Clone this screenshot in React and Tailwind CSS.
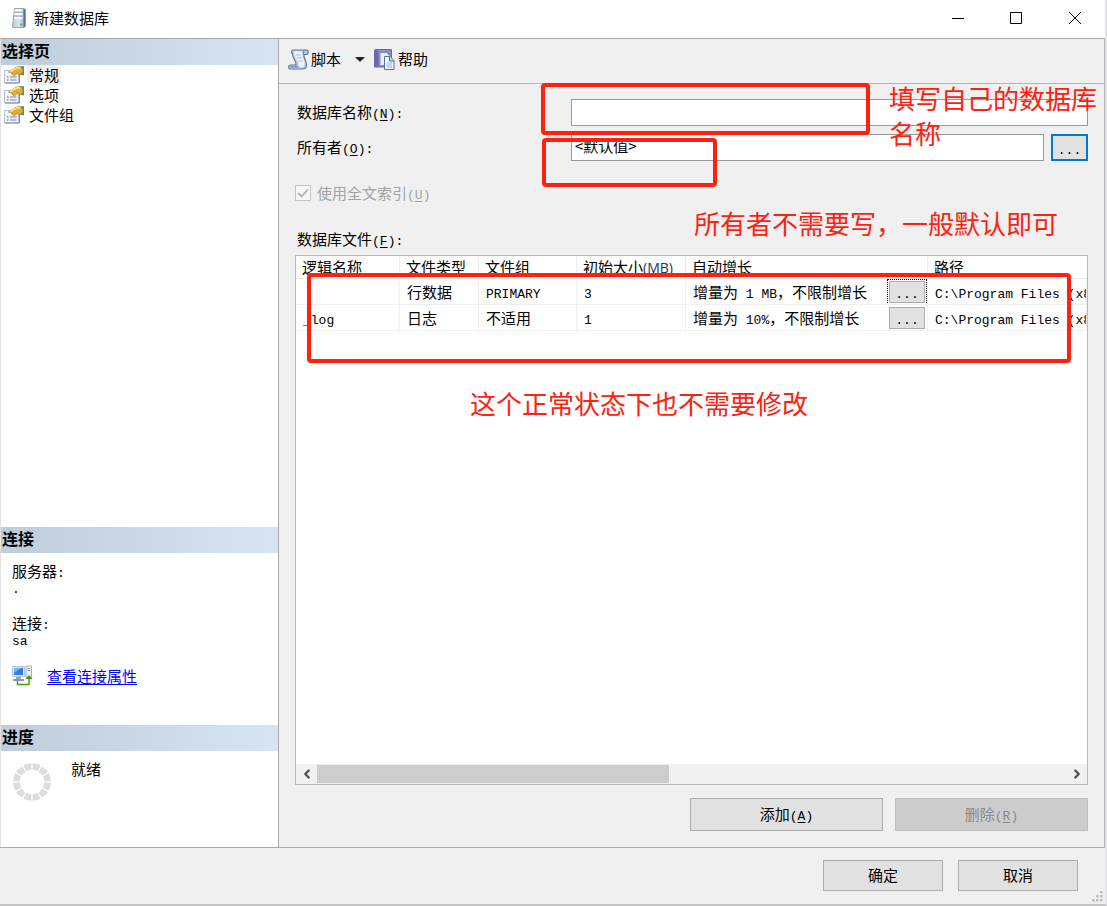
import { ChevronLeft, ChevronRight } from 'lucide-react';

const pages = ['常规', '选项', '文件组'];

const files = [
  { name: '', type: '行数据', group: 'PRIMARY', size: '3', growth: ['增量为', ' 1 MB', '，不限制增长'], path: 'C:\\Program Files (x86)' },
  { name: '_log', type: '日志', group: '不适用', size: '1', growth: ['增量为', ' 10%', '，不限制增长'], path: 'C:\\Program Files (x86)' },
];

const Mono = ({ children }) => (
  <span className="font-['Liberation_Mono','Noto_Sans_CJK_SC',monospace] text-[13px] leading-none whitespace-pre">{children}</span>
);

// Windows style access key, e.g. (N)
const Key = ({ letter, colon }) => (
  <Mono>(<u className="underline-offset-2">{letter}</u>){colon && ':'}</Mono>
);

const ServerIcon = () => (
  <svg width="14" height="20" viewBox="0 0 14 20">
    <defs>
      <linearGradient id="srv" x1="0" x2="1">
        <stop offset="0" stopColor="#b9c9dc" />
        <stop offset="0.5" stopColor="#dde7f1" />
        <stop offset="1" stopColor="#8ba3c0" />
      </linearGradient>
    </defs>
    <path d="M2.500 0.500H12l1.500 1v17l-1.500 1H1L0.500 18z" fill="url(#srv)" stroke="#7f93b0" strokeWidth="0.800" />
    <path d="M2.500 2.500h8M2.500 6h8M2.500 10h8" stroke="#fff" strokeWidth="2" />
    <path d="M2.500 4.200h8M2.500 8h8" stroke="#7f97b5" strokeWidth="0.800" />
    <path d="M12.300 1.500v17" stroke="#566f92" strokeWidth="1.600" />
    <circle cx="9" cy="16.500" r="1.200" fill="#5fd23c" />
  </svg>
);

const PageIcon = () => (
  <svg width="21" height="18" viewBox="0 0 21 18">
    <path d="M0.500 4.500h14v12.500h-14z" fill="#f1f4fb" stroke="#b9c0d4" />
    <path d="M1 17h14.500V8" stroke="#7c88ab" fill="none" />
    <path d="M3 11h1.500M3 14h1.500" stroke="#7f8fd8" strokeWidth="1.500" />
    <path d="M6 11h6.500M6 14h6.500" stroke="#9aa8e2" strokeWidth="1.500" />
    <path d="M14 0.500h6v9l-4-1z" fill="#4b9468" />
    <path d="M17 0.500h3v4z" fill="#4a86b8" />
    <path d="M4.500 6L9 3.200l3-2 4.500-.4 2.700 2.700-.4 3.500-3.300 1.500-2.500-1-2.500 2.300-1.800-.8-.7-1.800z" fill="#e6ab2c" stroke="#a8781c" strokeWidth="0.700" />
    <path d="M6 5.800L10.500 3l3-1.200 2.800 .2" stroke="#ffe791" strokeWidth="1.500" fill="none" />
  </svg>
);

const ScriptIcon = () => (
  <svg width="21" height="21" viewBox="0 0 21 21">
    <path d="M5 1h13c3 0 3 4.500 0 4.500h-2c-1 3 3 7 2.500 11-.3 2.500-1.500 3.500-3.500 3.500H2.500c-2.500 0-2.500-4 0-4H8C9 12 4 9 4.500 5 3 4 3 1.500 5 1z" fill="#b8cce8" stroke="#64799b" strokeWidth="1.200" />
    <path d="M6 2.500h8.500c-1.500 5 3 8.500 2 13-.5 2-1.500 2.500-3 2.500h-3C12 12 5 9 6 2.500z" fill="#eaf2fb" />
    <path d="M7.500 6h5M8.500 9h5M10.500 12h4" stroke="#a5bbdb" />
    <path d="M16 5.500c-1.500-1-1-4 1.500-4M2.500 17.800h8" fill="none" stroke="#7289ae" strokeWidth="1.200" />
  </svg>
);

const HelpIcon = () => (
  <svg width="21" height="21" viewBox="0 0 21 21">
    <path d="M0.500 1l1.500-.5h15.500v17.500h-17z" fill="#8f8bc9" stroke="#6a66a8" />
    <path d="M1 1.500h3.500V17.500H1z" fill="#6b67ae" />
    <path d="M6 3.500h6.500l3 3v10H6z" fill="#e9f0fa" stroke="#7f90b4" />
    <path d="M10.500 7.500h5.500l4 4v9h-9.500z" fill="#f6faff" stroke="#56719a" />
    <path d="M15.500 7.500v4.500H20" fill="#b9cfea" stroke="#56719a" />
    <path d="M12.500 14h5.500M12.500 16h5.500M12.500 18h5.500" stroke="#93afd6" />
  </svg>
);

const ConnectionIcon = () => (
  <svg width="21" height="21" viewBox="0 0 21 21">
    <path d="M0.500 1.500h12v10h-12z" fill="#dce6f3" stroke="#b9c4d2" />
    <path d="M2 3h9v7H2z" fill="#2f7ce0" />
    <path d="M2 3h7L2 8z" fill="#78b4f5" />
    <path d="M4 12h5v2H4z" fill="#9aa6b5" />
    <path d="M1 14h11v2H1z" fill="#8b97a8" />
    <path d="M14 1h5.500v12H14z" fill="#e9edf3" stroke="#a6b0be" />
    <path d="M15.500 3.500h2.500M15.500 5.500h2.500" stroke="#8593a6" />
    <path d="M5.500 16v3.500H17V13" fill="none" stroke="#3aa00c" strokeWidth="1.400" />
    <path d="M17 10l3.500 4h-7z" fill="#3aa00c" />
  </svg>
);

const Spinner = () => (
  <svg width="38" height="38" viewBox="0 0 38 38">
    <circle cx="19" cy="19" r="15.500" fill="none" stroke="#dcdcdc" strokeWidth="6.500" pathLength="120" strokeDasharray="8.400 1.600" strokeDashoffset="-0.800" />
  </svg>
);

const SectionTitle = ({ children }) => (
  <h2 className="h-[26px] shrink-0 pl-px leading-[22px] text-[16px] font-bold bg-linear-to-r from-[#bfccda] to-[#d7e5f3]">
    {children}
  </h2>
);

const Sidebar = () => (
  <aside className="w-[279px] shrink-0 flex flex-col bg-white border-l border-l-[#e3e3e3] border-r border-r-[#a9a9ae]">
    <SectionTitle>选择页</SectionTitle>
    <nav className="flex-1 pl-[3px]">
      {pages.map((page, i) => (
        <button key={page} className="flex items-center h-5 gap-0.5">
          <PageIcon />
          <span className={i === 0 ? 'px-0.5 leading-5 bg-[#f0f0f0]' : 'px-0.5 leading-5'}>{page}</span>
        </button>
      ))}
    </nav>

    <SectionTitle>连接</SectionTitle>
    <div className="h-[172px] pl-[11px] pt-2">
      <p className="h-5 leading-5">服务器<Mono>:</Mono></p>
      <p className="h-3 leading-3"><Mono>.</Mono></p>
      <p className="h-5 mt-5 leading-5">连接<Mono>:</Mono></p>
      <p className="h-3 leading-3"><Mono>sa</Mono></p>
      <div className="flex items-center gap-3.5 mt-5">
        <ConnectionIcon />
        <a href="#connection" className="text-[#0000ff] underline underline-offset-2 leading-5">查看连接属性</a>
      </div>
    </div>

    <SectionTitle>进度</SectionTitle>
    <div className="h-24 flex items-start gap-5 pl-3 pt-3">
      <Spinner />
      <p className="leading-3">就绪</p>
    </div>
  </aside>
);

const FileTable = () => (
  <div className="flex-1 flex flex-col overflow-hidden bg-white border border-[#b9b9c2]">
    <table className="w-full table-fixed border-separate border-spacing-0 text-left">
      <colgroup>
        <col className="w-[104px]" />
        <col className="w-[79px]" />
        <col className="w-[98px]" />
        <col className="w-[109px]" />
        <col className="w-[242px]" />
        <col />
      </colgroup>
      <thead>
        <tr className="h-[23px] whitespace-nowrap">
          {['逻辑名称', '文件类型', '文件组', '初始大小', '自动增长', '路径'].map((title) => (
            <th key={title} className="p-0 pl-1.5 font-normal leading-5 border-r border-b border-[#ececec] last:border-r-0">
              {title}
              {title === '初始大小' && <span className="text-[14px] leading-none font-['Open_Sans',sans-serif] text-[#26345c]">(MB)</span>}
            </th>
          ))}
        </tr>
      </thead>
      <tbody>
        {files.map((file, i) => (
          <tr key={file.type} className="h-[26px] whitespace-nowrap [&>td]:p-0 [&>td]:pl-[7px] [&>td]:leading-5 [&>td]:overflow-hidden [&>td]:border-r [&>td]:border-b [&>td]:border-[#f0f0f0]">
            <td><Mono>{file.name}</Mono></td>
            <td>{file.type}</td>
            <td>{i === 0 ? <Mono>{file.group}</Mono> : file.group}</td>
            <td><Mono>{file.size}</Mono></td>
            <td>
              <div className="flex items-center justify-between h-[25px]">
                <span>{file.growth[0]}<Mono>{file.growth[1]}</Mono>{file.growth[2]}</span>
                <span className={i === 0 ? 'p-px border border-dotted border-black' : 'p-px border border-transparent'}>
                  <button aria-label="更改自动增长" className="block w-9 h-[22px] bg-[#e1e1e1] border border-[#adadad] leading-5">
                    <Mono>...</Mono>
                  </button>
                </span>
              </div>
            </td>
            <td><Mono>{file.path}</Mono></td>
          </tr>
        ))}
      </tbody>
    </table>

    <div className="mt-auto h-5 flex items-center bg-[#f0f0f0]">
      <button aria-label="向左滚动" className="w-[21px] flex justify-center text-[#505050]">
        <ChevronLeft size={14} strokeWidth={4} />
      </button>
      <div className="flex-1 h-[18px]">
        <div className="w-[47%] h-full bg-[#cdcdcd]" />
      </div>
      <button aria-label="向右滚动" className="w-[21px] flex justify-center text-[#505050]">
        <ChevronRight size={14} strokeWidth={4} />
      </button>
    </div>
  </div>
);

const General = () => (
  <main className="flex-1 min-w-0 flex flex-col border-r border-[#b4b4b8]">
    <div className="h-[45px] shrink-0 flex items-center pl-[9px] pb-1 border-b border-[#b4b4b8]">
      <button className="flex items-center gap-0.5">
        <ScriptIcon />
        脚本
      </button>
      <button aria-label="脚本选项" className="pl-3.5 pr-[9px]">
        <svg width="10" height="5" viewBox="0 0 10 5"><path d="M0 0h10L5 5z" fill="#222" /></svg>
      </button>
      <button className="flex items-center gap-[3px]">
        <HelpIcon />
        帮助
      </button>
    </div>

    <div className="flex-1 flex flex-col px-4 pt-[15px] pb-4">
      <div className="flex items-center">
        <label htmlFor="db-name" className="w-[276px] pl-0.5">数据库名称<Key letter="N" colon /></label>
        <input id="db-name" type="text" className="flex-1 min-w-0 h-[27px] px-1 bg-white border border-[#999999] outline-none" />
      </div>
      <div className="flex items-center mt-2">
        <label htmlFor="owner" className="w-[276px] pl-0.5">所有者<Key letter="O" colon /></label>
        <input id="owner" type="text" defaultValue="<默认值>" className="flex-1 min-w-0 h-[27px] px-[3px] pb-1 bg-white border border-[#999999] outline-none" />
        <button aria-label="浏览所有者" className="w-[37px] h-[27px] ml-[7px] bg-[#e1e1e1] border-2 border-[#0078d7] leading-5"><Mono>...</Mono></button>
      </div>

      <div className="flex items-center gap-1.5 mt-5 h-6 text-[#a3a3a3]">
        <span className="relative flex">
          <input id="fulltext" type="checkbox" defaultChecked disabled className="appearance-none size-4 bg-[#f7f7f7] border border-[#c4c4c4]" />
          <svg className="absolute inset-0 pointer-events-none" width="16" height="16" viewBox="0 0 16 16">
            <path d="M3 8l3.500 3.500L13 4.500" fill="none" stroke="#b0b0b0" strokeWidth="1.800" />
          </svg>
        </span>
        <label htmlFor="fulltext">使用全文索引<Key letter="U" /></label>
      </div>

      <h3 className="h-5 mt-6 mb-1.5 pl-0.5 leading-5">数据库文件<Key letter="F" colon /></h3>
      <FileTable />

      <div className="flex justify-end gap-3 mt-[13px]">
        <button className="w-[193px] h-[33px] bg-[#e1e1e1] border border-[#adadad]">添加<Key letter="A" /></button>
        <button disabled className="w-[193px] h-[33px] bg-[#cccccc] border border-[#bfbfbf] text-[#8b8b8b]">删除<Key letter="R" /></button>
      </div>
    </div>
  </main>
);

const Annotations = () => (
  <div className="absolute inset-0 pointer-events-none text-[26px] leading-[35px] text-[#ff2010]">
    <div className="absolute left-[541px] top-[83px] w-[329px] h-[52px] border-4 border-[#ff2010] rounded-sm" />
    <div className="absolute left-[542px] top-[138px] w-[175px] h-[49px] border-4 border-[#ff2010] rounded-sm" />
    <div className="absolute left-[307px] top-[273px] w-[764px] h-[90px] border-4 border-[#ff2010] rounded-sm" />
    <p className="absolute left-[889px] top-[80px] w-[210px]">填写自己的数据库名称</p>
    <p className="absolute left-[694px] top-[205px] whitespace-nowrap">所有者不需要写，一般默认即可</p>
    <p className="absolute left-[470px] top-[385px] whitespace-nowrap">这个正常状态下也不需要修改</p>
  </div>
);

const App = () => {
  return (
    <div className="relative min-h-screen flex flex-col bg-[#f0f0f0] border-r-2 border-r-[#e2e2e6] border-b-2 border-b-[#c4c4c4] text-black text-[15px] font-['Noto_Sans_CJK_SC',sans-serif]">
      {/* Title bar */}
      <header className="h-[39px] shrink-0 flex items-center pl-3 pb-0.5 bg-white border-b border-[#a8a8a8]">
        <ServerIcon />
        <h1 className="ml-2 flex-1">新建数据库</h1>
        <button aria-label="最小化" className="w-[58px] flex justify-center">
          <svg width="12" height="12" viewBox="0 0 12 12"><path d="M0 6.500h12" stroke="#000" /></svg>
        </button>
        <button aria-label="最大化" className="w-[58px] flex justify-center">
          <svg width="12" height="12" viewBox="0 0 12 12"><path d="M0.500 0.500h11v11h-11z" fill="none" stroke="#000" /></svg>
        </button>
        <button aria-label="关闭" className="w-[60px] flex justify-center">
          <svg width="12" height="12" viewBox="0 0 12 12"><path d="M0 0l12 12M12 0L0 12" stroke="#000" /></svg>
        </button>
      </header>

      <div className="flex-1 flex">
        <Sidebar />
        <General />
      </div>

      {/* Dialog buttons */}
      <footer className="relative h-[57px] shrink-0 flex justify-end gap-[15px] pt-3 pr-[27px] border-t border-[#a9a9ae]">
        <button className="w-[120px] h-[31px] bg-[#e1e1e1] border border-[#adadad]">确定</button>
        <button className="w-[120px] h-[31px] bg-[#e1e1e1] border border-[#adadad]">取消</button>
        <svg className="absolute right-0.5 bottom-0.5" width="12" height="12" viewBox="0 0 12 12">
          <path d="M9 1h2.500v2.500H9zM9 5h2.500v2.500H9zM9 9h2.500v2.500H9zM5 5h2.500v2.500H5zM5 9h2.500v2.500H5zM1 9h2.500v2.500H1z" fill="#bdbdbd" />
        </svg>
      </footer>

      <Annotations />
    </div>
  );
};

export default App;
